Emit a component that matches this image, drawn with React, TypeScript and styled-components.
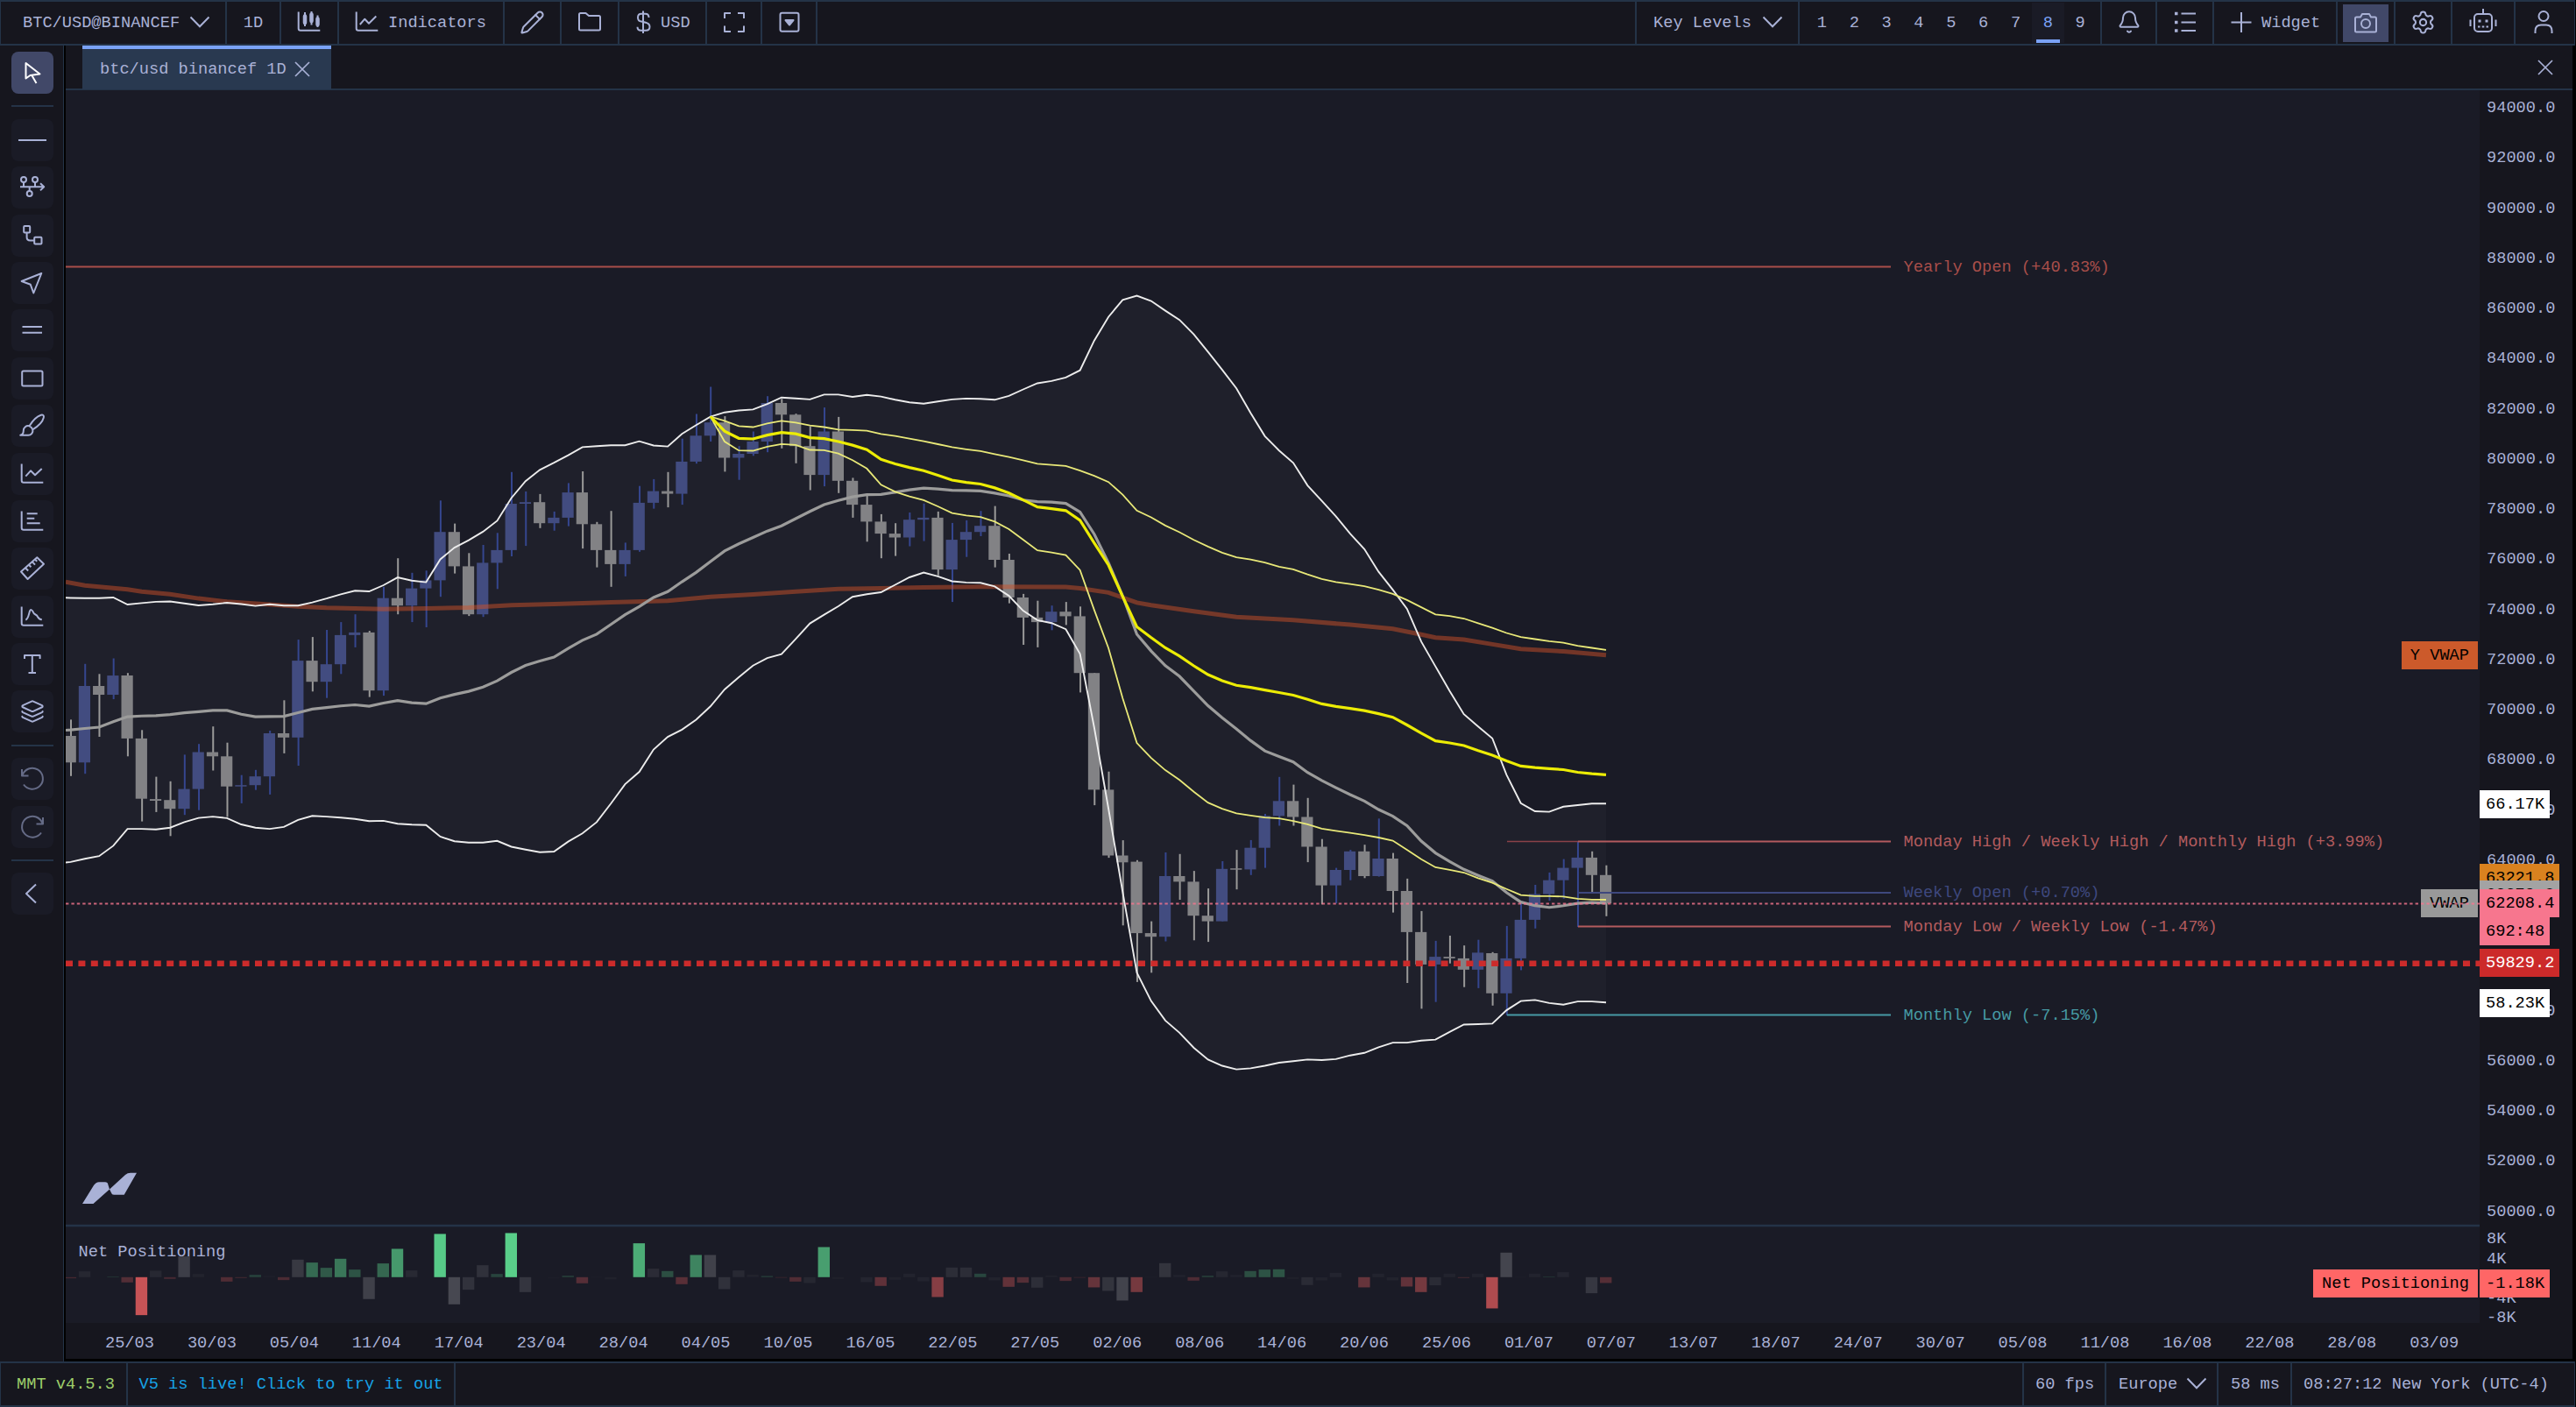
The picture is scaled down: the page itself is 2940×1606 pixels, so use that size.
import React from 'react';
import styled, {createGlobalStyle} from 'styled-components';
import {Bell, Layers, Pencil, Settings} from 'lucide-react';

const GlobalStyle = createGlobalStyle`
  * {
    box-sizing: border-box;
  }

  body {
    margin: 0;
    background: #000;
    color: #a9b1d6;
    font: 18.67px/24px "Liberation Mono", monospace;
    overflow: hidden;
  }

  svg {
    display: block;
    flex: none;
  }
`;

/* ---------- data ---------- */

type Candle = [number, number, number, number, 0 | 1];
// wick top, body top, body bottom, wick bottom, rising
const candles: Candle[] = [
    [821.4, 840, 870.3, 885.8, 0], [757.8, 783, 870.3, 883.2, 1], [769.3, 783, 793, 841, 0], [751.5, 771.1, 793, 798.1, 1],
    [768.2, 771, 842.9, 863.3, 0], [833.3, 842.9, 911.7, 937.6, 0], [886.6, 912.1, 914, 926.9, 0], [891.8, 913.2, 923.2, 954.3, 0],
    [861.4, 900.6, 923.2, 930.2, 1], [849.2, 858.5, 900.6, 924.7, 1], [829.2, 858.5, 863.3, 879.5, 0], [847.7, 863.3, 897.7, 932.5, 0],
    [884.7, 896.2, 897.7, 916.9, 1], [878.8, 886.2, 896.2, 901.7, 1], [834, 837, 886.2, 906.9, 1], [799.3, 837, 841.8, 859.9, 0],
    [730.1, 754.1, 841.8, 874, 1], [727.1, 754.1, 778.2, 789.3, 0], [719, 758.2, 778.2, 796.7, 1], [710.1, 724.9, 758.2, 769.3, 1],
    [701.2, 721.9, 724.9, 738.9, 1], [720.1, 721.9, 788.2, 795.6, 0], [669.8, 682.7, 788.2, 794.1, 1], [637.2, 682.7, 691.2, 701.2, 0],
    [653.8, 671.6, 691.2, 710.1, 1], [651.3, 662.4, 671.6, 716, 1], [571.3, 607.2, 662.4, 681.2, 1], [597.6, 607.2, 646.4, 654.6, 0],
    [631.3, 646.4, 701.2, 703.1, 0], [622, 642.4, 701.2, 704.2, 1], [608.3, 627.9, 642.4, 672.3, 1], [538.8, 575, 627.9, 635, 1],
    [561, 573.2, 575, 623.1, 1], [563.9, 573.2, 597.2, 602.8, 0], [583.9, 590.9, 597.2, 605.7, 1], [551.4, 562.1, 590.9, 600.6, 1],
    [538, 562.1, 598.3, 626.1, 0], [595.8, 598.3, 627.9, 647.6, 0], [583.2, 627.9, 643.9, 669.8, 0], [619.4, 627.9, 643.9, 657.9, 1],
    [554.7, 573.9, 627.9, 629.8, 1], [546.9, 560.6, 573.9, 580.6, 1], [538.8, 560.6, 563.6, 579.1, 0], [500.7, 526.9, 563.6, 576.1, 1],
    [472.5, 497.3, 526.9, 529.2, 1], [441.5, 482.2, 497.3, 504, 1], [475.1, 482.2, 522.5, 538.4, 0], [509.2, 518, 522.5, 547.7, 1],
    [492.5, 504, 518, 520.3, 1], [452.2, 460, 504, 516.2, 1], [455.2, 460, 473.3, 511.8, 0], [472.2, 473.3, 509.2, 528.8, 0],
    [486.6, 509.2, 542.1, 559.5, 0], [465.1, 492.5, 542.1, 555.1, 1], [475.9, 492.5, 548.8, 562.8, 0], [545.4, 548.8, 576.1, 590.9, 0],
    [564.3, 576.1, 595.4, 618.3, 0], [586.9, 595.4, 609.1, 637.2, 0], [597.2, 609.1, 613.5, 634.6, 0], [585, 593.2, 613.5, 623.5, 1],
    [574.7, 590.9, 593.2, 617.6, 1], [583.9, 590.9, 650.1, 656.8, 0], [596.9, 616.1, 650.1, 687.1, 1], [593.9, 607.2, 616.1, 635.7, 1],
    [583.2, 600.2, 607.2, 612, 1], [577.6, 600.2, 639, 647.6, 0], [632, 639, 682, 688.6, 0], [677.9, 682, 704.9, 736, 0],
    [685.7, 704.9, 710.1, 738.9, 0], [691.2, 698.2, 710.1, 719.3, 1], [687.1, 698.2, 703.4, 713.4, 0], [692.3, 703.4, 768.2, 790.4, 0],
    [768.2, 768.2, 901.4, 919.1, 0], [880.7, 901.4, 976.5, 979.1, 0], [959.1, 976.5, 984.3, 1056.3, 0], [981.8, 983.6, 1065.1, 1120.9, 0],
    [1051.6, 1065.1, 1069.2, 1110.3, 0], [973, 1000, 1069.2, 1074.5, 1], [974.8, 1000, 1006.4, 1027, 0], [994.1, 1006.4, 1045.2, 1073.3, 0],
    [1014.1, 1045.2, 1051.6, 1075.1, 0], [983, 991.8, 1051.6, 1051.6, 1], [970.1, 991.2, 992.4, 1015.2, 0], [958.9, 967.7, 992.4, 998.8, 1],
    [929, 931.3, 967.7, 990.6, 1], [886.8, 914.3, 931.3, 942.5, 1], [895.6, 914.3, 932.5, 942.5, 0], [910.8, 932.5, 966.5, 984.1, 0],
    [957.7, 966.5, 1010.6, 1032.3, 0], [990.6, 993, 1010.6, 1031.1, 1], [970.1, 971.8, 993, 1004.7, 1], [964.2, 971.8, 1000, 1002.3, 0],
    [934.3, 980, 1000, 1000.6, 1], [973.6, 980, 1017, 1041.6, 0], [1002.9, 1017, 1063.9, 1122, 0], [1039.9, 1063.9, 1100.9, 1151.4, 0],
    [1073.9, 1092.1, 1100.9, 1143.7, 1], [1068, 1092.1, 1093.9, 1099.7, 0], [1079.2, 1093.9, 1106.8, 1126.7, 0], [1072.7, 1087.4, 1106.8, 1127.9, 1],
    [1086.8, 1088, 1133.8, 1147.8, 0], [1056.9, 1093.9, 1133.8, 1159, 1], [1029.9, 1049.9, 1093.9, 1107.4, 1], [1010, 1020.5, 1049.9, 1059.8, 1],
    [995.9, 1004.7, 1020.5, 1028.1, 1], [980.6, 990.6, 1004.7, 1025.8, 1], [960.7, 978.9, 990.6, 1058.1, 1], [971.8, 978.9, 998.8, 1019.4, 0],
    [987.7, 998.8, 1031.1, 1045.8, 0],
];

const bandTop = [
    682.5, 682.8, 682.8, 682, 690, 688.4, 686.9, 686.5, 688.7, 691, 689.8, 688, 689.5, 691.6, 689.8, 691.2, 691.2, 687.6, 683.2, 678.3,
    674.3, 675, 668, 659.1, 662.8, 664.6, 638.4, 625.1, 616.6, 606.9, 594.4, 568.5, 549.2, 536.3, 528.2, 519.6, 510.4, 509.3, 508.2, 508.2,
    503.7, 508.5, 509.6, 495.2, 485.2, 475.6, 470.7, 468.5, 467.4, 461.1, 453.7, 454.8, 455.9, 450.4, 450.4, 453, 450.8, 452.6, 456.3, 459.3,
    460.8, 458.2, 455.9, 454.9, 455.3, 456.3, 451.9, 444.5, 437.5, 434.9, 430.9, 422.7, 388.7, 361.7, 342.3, 337.6, 343.5, 354.6, 365.2, 381.6,
    401.6, 422.1, 443.2, 471.4, 497.8, 514.2, 528.3, 554.1, 571.7, 589.3, 609.2, 626.8, 652.7, 673.2, 694.9, 732.4, 760.6, 788.8, 815.2, 829.3,
    842.7, 884.4, 916.7, 926, 926.6, 920.8, 919, 917.3, 917.3,
];

const bandBottom = [
    983.9, 980.2, 977.2, 965.4, 946.1, 946.1, 946.7, 944.7, 938.4, 933.6, 932.1, 933.9, 941, 944.7, 946.1, 943.9, 935.8, 931.3, 932.1, 933.2,
    934.7, 937.3, 936.9, 940.2, 941.3, 941.7, 955, 960.2, 961.7, 961.7, 959.8, 966.5, 969.8, 972.8, 972, 960.6, 951.3, 938.4, 917.3, 895.1,
    881, 855.5, 841.1, 832.9, 821.5, 806.3, 787, 773, 759.7, 751.2, 746.7, 729.3, 711.6, 701.6, 692, 681.2, 678.3, 676, 667.5, 659,
    653.5, 657.9, 663.5, 664.9, 665.3, 669.4, 680.1, 697.1, 707.9, 711.2, 718.2, 746.3, 830.7, 923, 1018.2, 1110.3, 1142.6, 1164.9, 1178.9, 1196,
    1209.4, 1216.5, 1220.6, 1219.4, 1216.5, 1213, 1211.2, 1209.4, 1210, 1208.9, 1204.7, 1201.8, 1195.4, 1190.1, 1190.1, 1187.7, 1186.6, 1177.8, 1169.5, 1169,
    1168.4, 1153.1, 1142.6, 1141.4, 1144.9, 1146.7, 1143.1, 1143.1, 1144.3,
];

// anchored vwap starts on this candle: value, deviation
const anchorStart = 45;
const anchored: [number, number][] = [
    [475.5, 0], [492.2, 11.8], [500.3, 13.9], [501, 13.5], [496.6, 13.3], [493.6, 13.3], [495.1, 12.8], [499.6, 13.9], [500.7, 13.2],
    [504, 13.6], [508.1, 17.2], [513.2, 21.6], [524.3, 29], [529.5, 31.8], [533.6, 33], [537.3, 33.6], [542.5, 35.5], [548, 37.6],
    [550.6, 37.8], [552.5, 37.6], [556.9, 38.5], [562.8, 41.2], [570.6, 45.3], [578.7, 49.4], [580.6, 50], [582.8, 50.9], [593.9, 56.8],
    [619.8, 76.6], [645, 94.8], [680.8, 116.2], [715.4, 132.6], [727.8, 137.3], [739.5, 139.6], [748.9, 141.4], [760, 143.7], [770, 146.1],
    [777, 146.1], [782.3, 146.1], [784.7, 146.1], [787.6, 145.5], [790.5, 143.7], [793.5, 143.7], [798.2, 142.6], [803.4, 142.5],
    [806.4, 142], [808.7, 142], [811.1, 142], [814.6, 141.4], [818.7, 140.8], [827.5, 142.6], [836.9, 143.8], [845.7, 144.3],
    [848, 144.9], [851, 145], [856.8, 145.5], [862.1, 145.5], [868.6, 146.1], [874.4, 147.2], [876.2, 146.7], [877.4, 145.5],
    [878.5, 144.9], [881.5, 144.4], [883.2, 143.7], [884.4, 142.6],
];

const yearlyVwap: [number, number][] = [
    [-0.35, 664.2], [1, 668.3], [2, 669.8], [4, 672.7], [5, 675.3], [7, 678.3], [9, 683.1], [11, 686.8], [14, 690.1], [16, 692.3],
    [18, 693.8], [22, 695.3], [25, 694.5], [28, 693.4], [31, 690.8], [34, 689.4], [38, 687.5], [42, 685.7], [45, 681.2], [48, 678.6],
    [51, 675.3], [54, 672.3], [57, 671.6], [60, 670.5], [64, 669.8], [70, 670.1], [71, 671.6], [73, 676.4], [75, 687.9], [76, 690.8],
    [79, 697.8], [82, 704.3], [86, 707.8], [90, 713.1], [93, 717.8], [95, 724.2], [96, 727.8], [98, 730.1], [100, 735.4], [102, 740.7],
    [105, 743.6], [108, 747.7],
];

type Tone = 'g' | 'r' | 'n';
const netBars: [Tone, number][] = [
    ['r', -4], ['n', 20], ['n', 0], ['g', 2], ['r', -18], ['r', -130], ['n', 22], ['r', -6], ['n', 71], ['n', 11], ['n', 0], ['r', -15],
    ['r', -3], ['g', 8], ['n', 4], ['r', -10], ['n', 60], ['g', 50], ['g', 32], ['g', 63], ['g', 26], ['n', -75], ['g', 47], ['g', 97],
    ['n', 23], ['n', 1], ['g', 148], ['n', -93], ['n', -43], ['n', 41], ['g', 11], ['g', 151], ['n', -51], ['n', 0], ['n', -3], ['g', 5],
    ['r', -21], ['n', 2], ['n', -8], ['n', 1], ['g', 116], ['n', 29], ['g', 21], ['r', -24], ['g', 76], ['n', 76], ['n', -41], ['n', 23],
    ['n', 9], ['g', 4], ['r', -2], ['r', -15], ['n', -20], ['g', 103], ['n', -6], ['n', 0], ['n', -17], ['r', -30], ['n', -9], ['n', 12],
    ['n', -14], ['r', -68], ['n', 33], ['n', 33], ['g', 12], ['n', -11], ['r', -33], ['r', -19], ['n', -36], ['n', 6], ['r', -13], ['r', -2],
    ['r', -35], ['n', -47], ['n', -80], ['r', -51], ['n', 2], ['n', 48], ['n', 8], ['r', -12], ['g', 5], ['n', 20], ['n', 8], ['g', 21],
    ['g', 26], ['g', 27], ['n', -6], ['n', -27], ['n', -11], ['n', 15], ['n', 1], ['r', -35], ['n', 12], ['n', -11], ['r', -32], ['r', -51],
    ['n', -28], ['n', 12], ['r', -3], ['n', 12], ['r', -107], ['n', 84], ['n', 2], ['n', 12], ['g', 2], ['n', 17], ['n', 1], ['n', -55],
    ['r', -20],
];

const prices = Array.from({length: 23}, (_, i) => (94000 - i * 2000).toFixed(1));

const dates = [
    '25/03', '30/03', '05/04', '11/04', '17/04', '23/04', '28/04', '04/05', '10/05', '16/05', '22/05', '27/05', '02/06', '08/06', '14/06',
    '20/06', '25/06', '01/07', '07/07', '13/07', '18/07', '24/07', '30/07', '05/08', '11/08', '16/08', '22/08', '28/08', '03/09',
];

/* ---------- icons ---------- */

const Glyph = styled.svg.attrs({viewBox: '0 0 28 28', width: 28, height: 28})`
  fill: none;
  stroke: currentColor;
  stroke-width: 2;
  stroke-linejoin: round;
`;

const Chevron = () => (
    <svg width="24" height="14" viewBox="0 0 24 14" fill="none" stroke="currentColor" strokeWidth="2">
        <path d="M1.5 1.5 12 12.2 22.5 1.5"/>
    </svg>
);

const Cross = () => (
    <svg width="18" height="18" viewBox="0 0 18 18" fill="none" stroke="currentColor" strokeWidth="1.7">
        <path d="M1 1 17 17M17 1 1 17"/>
    </svg>
);

const axes = 'M1.7 2.5V21.5Q1.7 23.8 4 23.8H26.3';

const tools = [
    <Glyph><path d="M-2 14H30"/></Glyph>,
    <Glyph>
        <circle cx="4" cy="5" r="3"/><circle cx="17" cy="5" r="3"/><circle cx="10.7" cy="21" r="3"/>
        <path d="M0 13.3H27M23 9.2l4.2 4.1-4.2 4.1M4 8v5M17 8v5M10.7 13.5v4.5"/>
    </Glyph>,
    <Glyph>
        <rect x="4.2" y="3" width="7" height="7.6" rx="1"/><rect x="16.2" y="15.8" width="8.3" height="7.6" rx="1"/>
        <path d="M7.6 10.8v5q0 3.7 3.7 3.7h4.8"/>
    </Glyph>,
    <Glyph><path d="M24.3 3 1.6 12 11.8 15.8 15.3 25.5Z"/></Glyph>,
    <Glyph><path d="M2.5 10H25M2.5 16.7H25"/></Glyph>,
    <Glyph><rect x="2.2" y="5.5" width="23.3" height="17" rx="1.5"/></Glyph>,
    <Glyph>
        <path d="M10.5 14.3C14 8.5 19 3.2 23.8 1.7c2.4-.6 3.7.8 3 3C25.6 9.5 20.5 14.5 14.3 18.3M10.5 14.3a5.3 5.3 0 0 0-6.7 5.2c0 2.7-1.4 4.8-3.6 5.3h9a5.3 5.3 0 0 0 5.1-6.5M10.5 14.3a7 7 0 0 1 3.8 4"/>
    </Glyph>,
    <Glyph><path d={axes}/><path d="M6.3 16.6 12 10.3 17 15.3 24.7 8"/></Glyph>,
    <Glyph><path d={axes}/><path d="M7.7 5.3H19.7M7.7 10.7H16.3M7.7 16.3H22.7"/></Glyph>,
    <Glyph>
        <path d="M1 17.5 19.3 1.3 27 8.8 8.6 26Z"/>
        <path d="M6 13.2l3.2 3.3M10 9.7l2.4 2.5M13.8 6.3l3.2 3.3M17 3.5l2.2 2.3"/>
    </Glyph>,
    <Glyph><path d={axes}/><path d="M6.3 17.5C9 17 9.5 13 11 7.5Q12.5 4.5 14.5 8c1.5 4.5 4 2.5 5.5 6q1.5 3 4.8 3.3"/></Glyph>,
    <Glyph><path d="M5 8V4H22.6V8M13.8 4V24M9.5 24H18"/></Glyph>,
    <Layers size={28} strokeWidth={1.7}/>,
];

/* ---------- layout ---------- */

const line = '#243347';

const Page = styled.div`
  display: flex;
  flex-direction: column;
  width: 2940px;
  height: 1606px;
`;

const Bar = styled.div`
  display: flex;
  justify-content: space-between;
  flex: none;
  width: 2939px;
  height: 52px;
  background: #16161e;
  border: 2px solid ${line};
  border-left-width: 1px;
  border-right-width: 1px;
  white-space: pre;
`;

const Group = styled.div<{$right?: boolean}>`
  display: flex;
  border-left: ${p => p.$right ? `2px solid ${line}` : 'none'};
`;

const Cell = styled.div<{$w: number; $pad?: number; $gap?: number; $last?: boolean; $color?: string}>`
  display: flex;
  align-items: center;
  justify-content: ${p => p.$pad ? 'flex-start' : 'center'};
  gap: ${p => p.$gap || 0}px;
  width: ${p => p.$w}px;
  padding-left: ${p => p.$pad || 0}px;
  border-right: ${p => p.$last ? 'none' : `2px solid ${line}`};
  color: ${p => p.$color || 'inherit'};

  > svg {
    margin-bottom: 2px;
  }
`;

const Preset = styled.span<{$active?: boolean}>`
  width: 36.85px;
  height: 46px;
  line-height: 46px;
  text-align: center;
  color: ${p => p.$active ? '#7aa2f7' : 'inherit'};
  background: ${p => p.$active ? '#1a1b26' : 'none'};
  box-shadow: ${p => p.$active ? 'inset 5px 0 #1a1b26, inset -5px 0 #1a1b26, inset 0 -4px #7aa2f7' : 'none'};
`;

const Shot = styled.div`
  display: flex;
  align-items: center;
  justify-content: center;
  width: 52px;
  height: 43px;
  background: #414868;
`;

const Middle = styled.div`
  display: flex;
  flex: 1;
`;

const Side = styled.div`
  display: flex;
  flex-direction: column;
  align-items: center;
  gap: 6.4px;
  width: 73px;
  margin-right: 2px;
  padding: 7px 0 0 2px;
  background: #16161e;
  border-right: 1px solid ${line};
`;

const Tool = styled.div<{$active?: boolean; $dim?: boolean}>`
  display: flex;
  align-items: center;
  justify-content: center;
  flex: none;
  width: 48px;
  height: 48px;
  border-radius: 8px;
  background: ${p => p.$active ? '#414868' : '#1a1b26'};
  color: ${p => p.$active ? '#fff' : p.$dim ? '#656b86' : '#a9b1d6'};

  svg {
    overflow: visible;
  }
`;

const Rule = styled.div`
  flex: none;
  width: 48px;
  height: 2px;
  margin: 7px 0;
  background: ${line};
`;

const Panel = styled.div`
  display: flex;
  flex-direction: column;
  width: 2861px;
  height: 1499px;
  background: #16161e;
`;

const Tabs = styled.div`
  display: flex;
  align-items: center;
  justify-content: space-between;
  height: 51px;
  padding: 0 22px 0 19px;
  border-bottom: 2px solid ${line};
`;

const Tab = styled.div`
  display: flex;
  align-items: center;
  gap: 9px;
  width: 284px;
  height: 50px;
  padding-left: 20px;
  border-top: 4px solid #7aa2f7;
  background: #293950;
`;

const Chart = styled.div`
  position: relative;
  display: grid;
  grid-template-columns: 2755px 1fr;
  grid-template-rows: 1407px 1fr;
  flex: 1;
`;

const PriceAxis = styled.div`
  padding-left: 8px;
`;

const PriceList = styled.div`
  height: 1299px;
  padding-top: 8px;
  overflow: hidden;
`;

const Price = styled.div`
  height: 57.25px;
`;

const NetLabel = styled.div`
  height: 22.6px;
`;

const TimeAxis = styled.div`
  display: flex;
  padding: 11px 0 0 26px;
`;

const DateLabel = styled.span`
  flex: none;
  width: 93.95px;
  text-align: center;
`;

const Tag = styled.div<{$y: number; $bg: string; $fg?: string; $left?: boolean}>`
  position: absolute;
  top: ${p => p.$y - 103}px;
  ${p => p.$left ? 'right: 108px' : 'left: 2755px'};
  height: 32px;
  padding: 0 ${p => p.$left ? 10 : 6}px 0 ${p => p.$left ? 10 : 7}px;
  line-height: 33px;
  background: ${p => p.$bg};
  color: ${p => p.$fg || '#000'};
`;

const Overlay = styled.svg`
  position: absolute;
  left: 0;
  top: 0;
`;

const x = (i: number) => 80.6 + i * 16.226;
const path = (ys: number[], from = 0) => ys.map((y, i) => `${x(i + from).toFixed(1)},${y}`).join(' ');

const toneColor = {g: '#62e898', r: '#ff6666', n: '#ffffff'};
const toneAlpha = (tone: Tone, v: number) => {
    const a = Math.abs(v);
    return tone === 'g' ? .15 + a * .0048 : tone === 'r' ? .17 + a * .0045 : .015 + a * .002;
};

const levels = [
    {y: 304.5, from: 75, label: 'Yearly Open (+40.83%)', color: '#a84e4a'},
    {y: 960.5, from: 1801, label: 'Monday High / Weekly High / Monthly High (+3.99%)', color: '#b35b5e'},
    {y: 1019, from: 1801, label: 'Weekly Open (+0.70%)', color: '#3e487e'},
    {y: 1057.5, from: 1801, label: 'Monday Low / Weekly Low (-1.47%)', color: '#b35b5e'},
    {y: 1158.5, from: 1720, label: 'Monthly Low (-7.15%)', color: '#469aa4'},
];

const Plot = () => {
    const bandMiddle = bandTop.map((t, i) => (t + bandBottom[i]) / 2);
    const bandArea = path(bandTop) + ' ' + path(bandBottom).split(' ').reverse().join(' ');
    return (
        <svg width="2755" height="1407" viewBox="75 103 2755 1407" fill="none">
            <rect x="75" y="103" width="2755" height="1407" fill="#1a1b26"/>
            <polygon points={`75,682.3 ${bandArea} 75,984.5`} fill="#fff" fillOpacity=".022"/>
            {candles.map(([high, top, bottom, low, up], i) => (
                <g key={i}>
                    <rect x={x(i) - .6} y={high} width="2" height={low - high} fill={up ? '#35468f' : '#9a9a99'}/>
                    <rect x={x(i) - 7} y={top} width="13.2" height={Math.max(bottom - top, 1.5)} fill={up ? '#424c80' : '#828285'}/>
                </g>
            ))}
            <polyline points={yearlyVwap.map(([i, y]) => `${x(i)},${y}`).join(' ')} stroke="#cc5028" strokeOpacity=".5" strokeWidth="5"/>
            <polyline points={'75,833.5 ' + path(bandMiddle)} stroke="#9c9c9b" strokeWidth="3.2"/>
            <polyline points={'75,682.3 ' + path(bandTop)} stroke="#ececec" strokeWidth="1.9"/>
            <polyline points={'75,984.5 ' + path(bandBottom)} stroke="#ececec" strokeWidth="1.9"/>
            <polyline points={path(anchored.map(([v, d]) => v - d), anchorStart)} stroke="#e8e878" strokeWidth="1.8"/>
            <polyline points={path(anchored.map(([v, d]) => v + d), anchorStart)} stroke="#e8e878" strokeWidth="1.8"/>
            <polyline points={path(anchored.map(([v]) => v), anchorStart)} stroke="#ecec05" strokeWidth="3.2"/>

            <path d="M1720 960.5H1801" stroke="#8a4248" strokeWidth="1.5"/>
            {levels.map(l => (
                <g key={l.label}>
                    <path d={`M${l.from} ${l.y}H2158`} stroke={l.color} strokeWidth="2"/>
                    <text x="2172.5" y={l.y + 5} fill={l.color}>{l.label}</text>
                </g>
            ))}
            <path d="M75 1099.7H2830" stroke="#cc2b2b" strokeWidth="6.5" strokeDasharray="8 6.4"/>

            <path d="M94 1374 107 1353Q109.5 1349.5 113 1349.3H120Q123 1349.3 123.300 1352L125 1357.5 106.5 1374ZM125 1357.5 143 1341Q145.5 1338.7 149 1338.7H156L141.7 1363.7H130Q127.5 1363.7 127 1361.5Z" fill="#a9b1d6"/>

            <path d="M75 1399H2830" stroke={line} strokeWidth="2.5"/>
            {netBars.map(([tone, v], i) => (
                <rect
                    key={i}
                    x={x(i) - 7}
                    y={v > 0 ? 1457.8 - v / 3 : 1457.8}
                    width="13.4"
                    height={Math.abs(v) / 3}
                    fill={toneColor[tone]}
                    fillOpacity={toneAlpha(tone, v)}
                />
            ))}
            <text x="89.5" y="1433.5" fill="#a9b1d6">Net Positioning</text>
        </svg>
    );
};

function App() {
    return (
        <Page>
            <GlobalStyle/>
            <Bar>
                <Group>
                    <Cell $w={258} $pad={25} $gap={11}>BTC/USD@BINANCEF<Chevron/></Cell>
                    <Cell $w={62}>1D</Cell>
                    <Cell $w={66}>
                        <Glyph>
                            <path d={axes}/>
                            <path d="M9 3V19M16.5 2V17.5M23.5 6.5V20"/>
                            <path d="M9 7.5V15M16.5 5.5V13M23.5 10.5V17" strokeWidth="4.5" strokeLinecap="round"/>
                        </Glyph>
                    </Cell>
                    <Cell $w={189} $pad={18} $gap={10}>
                        <Glyph><path d={axes}/><path d="M5.8 17 11.3 10.7 16 15.7 24.3 7.5"/></Glyph>
                        Indicators
                    </Cell>
                    <Cell $w={65}><Pencil size={29} strokeWidth={1.7}/></Cell>
                    <Cell $w={66}>
                        <Glyph><path d="M2 5.5Q2 4 3.5 4H9.5L13 7H24.5Q26 7 26 8.5V22Q26 23.5 24.5 23.5H3.5Q2 23.5 2 22Z"/></Glyph>
                    </Cell>
                    <Cell $w={100} $pad={13} $gap={6}>
                        <Glyph>
                            <path d="M14 1.5V27M20.5 9Q20.5 4.8 16.5 4.8H12Q8 4.8 8 9T12 13.5L17 14.8Q21.5 16 21.5 19.5 21.5 23.8 17 23.8H11.5Q7.5 23.8 7.5 19.8"/>
                        </Glyph>
                        USD
                    </Cell>
                    <Cell $w={63}>
                        <Glyph><path d="M3 10V4H10M18 4H25V10M25 18.5V25H18M10 25H3V18.5"/></Glyph>
                    </Cell>
                    <Cell $w={63}>
                        <Glyph>
                            <rect x="3.5" y="3.8" width="21" height="21" rx="2"/>
                            <path d="M9.5 12H18.5L14 17.5Z" fill="currentColor"/>
                        </Glyph>
                    </Cell>
                </Group>
                <Group $right>
                    <Cell $w={186} $pad={19} $gap={12}>Key Levels<Chevron/></Cell>
                    <Cell $w={345} $pad={7}>
                        {[1, 2, 3, 4, 5, 6, 7, 8, 9].map(n => <Preset key={n} $active={n === 8}>{n}</Preset>)}
                    </Cell>
                    <Cell $w={63}><Bell size={28} strokeWidth={1.7}/></Cell>
                    <Cell $w={65}>
                        <Glyph><path d="M9.5 4.5H26M9.5 14.5H26M9.5 24H26"/><path d="M2 4.5H5.5M2 14.5H5.5M2 24H5.5" strokeWidth="3.5"/></Glyph>
                    </Cell>
                    <Cell $w={141} $pad={17} $gap={9}>
                        <Glyph><path d="M14 3V26M2.5 14.5H25.5"/></Glyph>
                        Widget
                    </Cell>
                    <Cell $w={66}>
                        <Shot>
                            <Glyph>
                                <path d="M3.5 7.5H8L10 4H18L20 7.5H24.5Q26 7.5 26 9V23Q26 24.5 24.5 24.5H3.5Q2 24.5 2 23V9Q2 7.5 3.5 7.5Z"/>
                                <circle cx="14" cy="15" r="5"/>
                            </Glyph>
                        </Shot>
                    </Cell>
                    <Cell $w={65}><Settings size={29} strokeWidth={1.7}/></Cell>
                    <Cell $w={72}>
                        <svg width="32" height="30" viewBox="0 0 32 30" fill="none" stroke="currentColor" strokeWidth="2">
                            <rect x="6" y="6" width="20" height="20" rx="4"/>
                            <path d="M16 0V6M1.5 12.5V20M30.5 12.5V20"/>
                            <path d="M10.5 14H13.5M18.5 14H21.5" strokeWidth="3"/>
                            <path d="M10 20.5H12.5M14.7 20.5H17.3M19.5 20.5H22"/>
                        </svg>
                    </Cell>
                    <Cell $w={67} $pad={18} $last>
                        <Glyph><circle cx="14" cy="7.5" r="5.5"/><path d="M4.5 27V24.5Q4.5 17.5 11 17.5H17Q23.5 17.5 23.5 24.5V27"/></Glyph>
                    </Cell>
                </Group>
            </Bar>

            <Middle>
                <Side>
                    <Tool $active>
                        <Glyph strokeWidth="2.5"><path d="M6.5 3V20.5L11.5 17 22.5 15.5Z M13 16.5 18.5 26"/></Glyph>
                    </Tool>
                    <Rule/>
                    {tools.map((icon, i) => <Tool key={i}>{icon}</Tool>)}
                    <Rule/>
                    <Tool $dim><Glyph><path d="M2 3V10.5H9.5M2.5 10A12 12 0 1 1 4 20.5"/></Glyph></Tool>
                    <Tool $dim><Glyph><path d="M26 3V10.5H18.5M25.5 10A12 12 0 1 0 24 20.5"/></Glyph></Tool>
                    <Rule/>
                    <Tool><Glyph><path d="M18 3.5 7 14 18 24.5"/></Glyph></Tool>
                </Side>

                <Panel>
                    <Tabs>
                        <Tab>btc/usd binancef 1D<Cross/></Tab>
                        <Cross/>
                    </Tabs>
                    <Chart>
                        <Plot/>
                        <PriceAxis>
                            <PriceList>{prices.map(p => <Price key={p}>{p}</Price>)}</PriceList>
                            {['8K', '4K', '', '-4K', '-8K'].map((v, i) => <NetLabel key={i}>{v}</NetLabel>)}
                        </PriceAxis>
                        <TimeAxis>{dates.map(d => <DateLabel key={d}>{d}</DateLabel>)}</TimeAxis>
                        <Tag $y={732} $bg="#cc5a2b" $left>Y VWAP</Tag>
                        <Tag $y={1015} $bg="#999" $left>VWAP</Tag>
                        <Tag $y={1448.5} $bg="#ff6666" $left>Net Positioning</Tag>
                        <Tag $y={901.5} $bg="#fff">66.17K</Tag>
                        <Tag $y={986} $bg="#d9821f">63221.8</Tag>
                        <Tag $y={1005} $bg="#a3a3a3">62279.0</Tag>
                        <Tag $y={1015} $bg="#f7768e">62208.4</Tag>
                        <Tag $y={1047} $bg="#f7768e">692:48</Tag>
                        <Tag $y={1083} $bg="#cc2a2a" $fg="#fff">59829.2</Tag>
                        <Tag $y={1128.5} $bg="#fff">58.23K</Tag>
                        <Tag $y={1448.5} $bg="#ff6666">-1.18K</Tag>
                        <Overlay width="2755" height="1407" viewBox="75 103 2755 1407">
                            <path d="M75 1031.5H2830" stroke="#f7768e" strokeOpacity=".8" strokeWidth="1.8" strokeDasharray="3.4 3"/>
                        </Overlay>
                    </Chart>
                </Panel>
            </Middle>

            <Bar>
                <Group>
                    <Cell $w={144.5} $pad={18} $color="#9ece6a">MMT v4.5.3</Cell>
                    <Cell $w={374} $pad={13} $color="#16a2e6">V5 is live! Click to try it out</Cell>
                </Group>
                <Group $right>
                    <Cell $w={94} $pad={13}>60 fps</Cell>
                    <Cell $w={128} $pad={14} $gap={10}>Europe<Chevron/></Cell>
                    <Cell $w={84} $pad={14}>58 ms</Cell>
                    <Cell $w={322} $pad={13} $last>08:27:12 New York (UTC-4)</Cell>
                </Group>
            </Bar>
        </Page>
    );
}

export default App;
